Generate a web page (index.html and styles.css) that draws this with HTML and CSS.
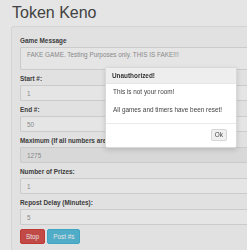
FILE: index.html
```html
<!DOCTYPE html>
<html lang="en">
<head>
    <meta charset="UTF-8">
    <meta name="viewport" content="width=device-width, initial-scale=1.0">
    <title>Token Keno</title>
    <link rel="stylesheet" href="styles.css">
</head>
<body>
    <div class="container">
        <h1 class="title">Token Keno</h1>
        <div class="well">
            <div class="group">
                <label>Game Message</label>
                <textarea class="field msg" readonly>FAKE GAME. Testing Purposes only. THIS IS FAKE!!!</textarea>
            </div>
            <div class="group">
                <label>Start #:</label>
                <input class="field" type="text" value="1">
            </div>
            <div class="group">
                <label>End #:</label>
                <input class="field" type="text" value="50">
            </div>
            <div class="group">
                <label>Maximum (If all numbers are drawn):</label>
                <input class="field" type="text" value="1275" disabled>
            </div>
            <div class="group">
                <label>Number of Prizes:</label>
                <input class="field" type="text" value="1">
            </div>
            <div class="group">
                <label>Repost Delay (Minutes):</label>
                <input class="field" type="text" value="5">
            </div>
            <div class="actions">
                <button class="btn btn-stop">Stop</button>
                <button class="btn btn-post">Post #s</button>
            </div>
        </div>
    </div>

    <!-- dialog shown over the page -->
    <div class="backdrop"></div>
    <div class="modal">
        <div class="modal-header">Unauthorized!</div>
        <div class="modal-body">
            <p>This is not your room!</p>
            <p>All games and timers have been reset!</p>
        </div>
        <div class="modal-footer">
            <button class="btn btn-ok">Ok</button>
        </div>
    </div>
</body>
</html>
```

FILE: styles.css
```css
html, body {
    margin: 0;
    overflow: hidden;
    background: #fff;
    font-family: "Liberation Sans", Arial, sans-serif;
}
.container {
    padding-left: 11px;
}
.title {
    margin: 0;
    padding: 3px 0 0 1px;
    font-size: 16px;
    line-height: 20px;
    font-weight: normal;
    color: #4a4a4a;
}
.well {
    margin-top: 3px;
    padding: 9px 0 9px 8px;
    background: #fbfbfb;
    border: 1px solid #ececec;
    border-right: none;
    border-radius: 3px 0 0 3px;
}
.group {
    margin-bottom: 4px;
}
.group label {
    display: block;
    font-size: 6.4px;
    line-height: 9px;
    font-weight: bold;
    color: #444;
    margin-bottom: 2px;
    white-space: nowrap;
}
.field {
    display: block;
    box-sizing: border-box;
    width: 100%;
    height: 16px;
    margin: 0;
    padding: 0 6px;
    font-family: inherit;
    font-size: 6.4px;
    color: #999;
    background: #fff;
    border: 1px solid #e2e2e2;
    border-right: none;
    border-radius: 2px 0 0 2px;
    outline: none;
}
.field:disabled {
    background: #f1f1f1;
    color: #999;
}
.msg {
    height: 23px;
    padding-top: 2px;
    line-height: 9px;
    resize: none;
    overflow: hidden;
}
.actions {
    display: flex;
    gap: 2px;
}
.btn {
    font-family: inherit;
    font-size: 6.4px;
    line-height: 9px;
    padding: 2px 5px;
    border: 1px solid transparent;
    border-radius: 2px;
    color: #fff;
    margin: 0;
}
.btn-stop {
    background: #d9534f;
    border-color: #d43f3a;
}
.btn-post {
    background: #5bc0de;
    border-color: #46b8da;
}
.backdrop {
    position: fixed;
    inset: 0;
    background: rgba(0, 0, 0, 0.1);
}
.modal {
    position: absolute;
    left: 105px;
    top: 67px;
    width: 132px;
    box-sizing: border-box;
    background: #fff;
    border: 1px solid rgba(0, 0, 0, 0.15);
    border-radius: 2px;
    box-shadow: 0 2px 5px rgba(0, 0, 0, 0.15);
    font-size: 6.4px;
    color: #444;
}
.modal-header {
    padding: 3px 6px;
    line-height: 9px;
    font-weight: bold;
    color: #333;
    background: #eeeeee;
    border-bottom: 1px solid #e6e6e6;
}
.modal-body {
    padding: 3px 7px 9px;
}
.modal-body p {
    margin: 0;
    line-height: 9px;
}
.modal-body p + p {
    margin-top: 9px;
}
.modal-footer {
    display: flex;
    justify-content: flex-end;
    padding: 5px 9px 6px;
    border-top: 1px solid #eaeaea;
}
.btn-ok {
    padding: 1px 3px;
    line-height: 8px;
    color: #444;
    background: #f0f0f0;
    border-color: #d6d6d6;
}
```
